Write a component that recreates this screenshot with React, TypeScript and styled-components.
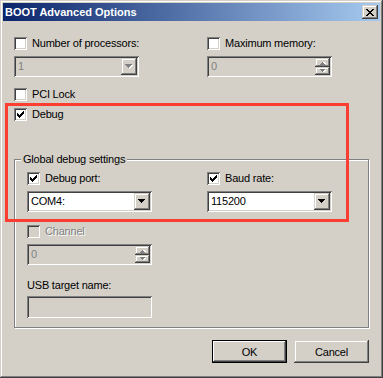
import * as React from 'react'
import styled, { createGlobalStyle, css } from 'styled-components'

const GlobalStyle = createGlobalStyle`
  html, body {
    margin: 0;
    padding: 0;
    background: #d4d0c8;
  }
  body {
    font-family: 'Liberation Sans', Arial, sans-serif;
    font-size: 11px;
    color: #000;
  }
`

const raised = css`
  box-shadow: inset -1px -1px #404040, inset 1px 1px #d4d0c8, inset -2px -2px #808080, inset 2px 2px #fff;
`

const sunken = css`
  box-shadow: inset 1px 1px #808080, inset -1px -1px #fff, inset 2px 2px #404040, inset -2px -2px #d4d0c8;
`

const Frame = styled.div`
  position: relative;
  width: 383px;
  height: 378px;
  box-sizing: border-box;
  padding: 3px;
  background: #d4d0c8;
  ${raised};
  display: flex;
  flex-direction: column;
`

const TitleBar = styled.div`
  height: 18px;
  flex: none;
  display: flex;
  align-items: center;
  justify-content: space-between;
  padding: 0 2px;
  background: linear-gradient(to right, #0a246a, #a6caf0);
  color: #fff;
  font-weight: bold;
  font-size: 11px;
`

const CloseButton = styled.div`
  width: 16px;
  height: 14px;
  box-sizing: border-box;
  background: #d4d0c8;
  ${raised};
  display: grid;
  place-items: center;
`

const Body = styled.div`
  flex: 1;
  display: flex;
  flex-direction: column;
  padding: 16px 11px 0 11px;
  letter-spacing: -0.2px;
`

const Columns = styled.div<{ $first: number }>`
  display: grid;
  grid-template-columns: ${p => p.$first}px 1fr;
`

const Field = styled.div`
  display: flex;
  flex-direction: column;
  gap: 6px;
`

const CheckRow = styled.label<{ $gap?: number; $disabled?: boolean }>`
  display: flex;
  align-items: center;
  gap: 5px;
  height: 13px;
  line-height: 13px;
  margin-top: ${p => p.$gap ?? 0}px;
  color: ${p => (p.$disabled ? '#808080' : '#000')};
  text-shadow: ${p => (p.$disabled ? '1px 1px #fff' : 'none')};
`

const Box = styled.span<{ $disabled?: boolean }>`
  width: 13px;
  height: 13px;
  flex: none;
  box-sizing: border-box;
  background: ${p => (p.$disabled ? '#d4d0c8' : '#fff')};
  ${sunken};
  display: grid;
  place-items: center;
`

const Sunken = styled.div<{ $disabled?: boolean; $h?: number }>`
  width: 125px;
  height: ${p => p.$h ?? 21}px;
  box-sizing: border-box;
  padding: 2px;
  background: ${p => (p.$disabled ? '#d4d0c8' : '#fff')};
  ${sunken};
  display: flex;
  color: ${p => (p.$disabled ? '#808080' : '#000')};
`

const Value = styled.span`
  flex: 1;
  padding-left: 2px;
  line-height: 17px;
`

const DropButton = styled.div`
  width: 16px;
  flex: none;
  background: #d4d0c8;
  ${raised};
  display: grid;
  place-items: center;
`

const SpinStack = styled.div`
  width: 15px;
  flex: none;
  display: flex;
  flex-direction: column;
`

const SpinButton = styled.div<{ $h: number }>`
  height: ${p => p.$h}px;
  background: #d4d0c8;
  ${raised};
  display: grid;
  place-items: center;
`

const Group = styled.div`
  width: 355px;
  height: 169px;
  box-sizing: border-box;
  margin-top: 38px;
  padding: 0 12px;
  border: 1px solid #808080;
  box-shadow: inset 1px 1px #fff, 1px 1px #fff;
  display: flex;
  flex-direction: column;
`

const Legend = styled.span`
  align-self: flex-start;
  margin: -7px 0 0 -6px;
  padding: 0 2px;
  line-height: 13px;
  background: #d4d0c8;
`

const Label = styled.div<{ $gap: number }>`
  margin-top: ${p => p.$gap}px;
  line-height: 13px;
`

const ButtonRow = styled.div`
  display: flex;
  justify-content: flex-end;
  gap: 7px;
  margin-top: 12px;
`

const Button = styled.div<{ $default?: boolean }>`
  width: 75px;
  height: 23px;
  box-sizing: border-box;
  display: grid;
  place-items: center;
  background: #d4d0c8;
  ${p =>
    p.$default
      ? css`box-shadow: inset 0 0 0 1px #000, inset -2px -2px #404040, inset 2px 2px #fff, inset -3px -3px #808080;`
      : raised};
`

const Highlight = styled.div`
  position: absolute;
  left: 5px;
  top: 103px;
  width: 344px;
  height: 119px;
  box-sizing: border-box;
  border: 3px solid #fc3d32;
  pointer-events: none;
`

const Check = () => (
  <svg width="7" height="7" viewBox="0 0 7 7" shapeRendering="crispEdges">
    <path d="M0 2h1v3H0zM1 3h1v3H1zM2 4h1v3H2zM3 3h1v3H3zM4 2h1v3H4zM5 1h1v3H5zM6 0h1v3H6z" fill="#000" />
  </svg>
)

const Arrow = ({ disabled }: { disabled?: boolean }) => (
  <svg width="8" height="5" viewBox="0 0 8 5" shapeRendering="crispEdges">
    {disabled && <path d="M1 1h7v1H1zM2 2h5v1H2zM3 3h3v1H3zM4 4h1v1H4z" fill="#fff" />}
    <path d="M0 0h7v1H0zM1 1h5v1H1zM2 2h3v1H2zM3 3h1v1H3z" fill={disabled ? '#808080' : '#000'} />
  </svg>
)

const SpinArrow = ({ up }: { up?: boolean }) => (
  <svg width="6" height="4" viewBox="0 0 6 4" shapeRendering="crispEdges">
    <g transform={up ? 'translate(0 4) scale(1 -1)' : undefined}>
      <path d="M1 1h5v1H1zM2 2h3v1H2z" fill="#fff" />
      <path d="M0 0h5v1H0zM1 1h3v1H1zM2 2h1v1H2z" fill="#808080" />
    </g>
  </svg>
)

const CloseX = () => (
  <svg width="8" height="7" viewBox="0 0 8 7" shapeRendering="crispEdges">
    <path
      d="M0 0h2v1H0zM6 0h2v1H6zM1 1h2v1H1zM5 1h2v1H5zM2 2h4v1H2zM3 3h2v1H3zM2 4h4v1H2zM1 5h2v1H1zM5 5h2v1H5zM0 6h2v1H0zM6 6h2v1H6z"
      fill="#000"
    />
  </svg>
)

const CheckItem = ({ label, checked, disabled, gap }: { label: string; checked?: boolean; disabled?: boolean; gap?: number }) => (
  <CheckRow $gap={gap} $disabled={disabled}>
    <Box $disabled={disabled}>{checked && <Check />}</Box>
    {label}
  </CheckRow>
)

const ComboBox = ({ value, disabled }: { value: string; disabled?: boolean }) => (
  <Sunken $disabled={disabled}>
    <Value>{value}</Value>
    <DropButton>
      <Arrow disabled={disabled} />
    </DropButton>
  </Sunken>
)

const SpinBox = ({ value }: { value: string }) => (
  <Sunken $disabled>
    <Value>{value}</Value>
    <SpinStack>
      <SpinButton $h={9}>
        <SpinArrow up />
      </SpinButton>
      <SpinButton $h={8}>
        <SpinArrow />
      </SpinButton>
    </SpinStack>
  </Sunken>
)

export default function App() {
  return (
    <>
      <GlobalStyle />
      <Frame>
        <TitleBar>
          <span>BOOT Advanced Options</span>
          <CloseButton>
            <CloseX />
          </CloseButton>
        </TitleBar>
        <Body>
          <Columns $first={193}>
            <Field>
              <CheckItem label="Number of processors:" />
              <ComboBox value="1" disabled />
            </Field>
            <Field>
              <CheckItem label="Maximum memory:" />
              <SpinBox value="0" />
            </Field>
          </Columns>
          <CheckItem label="PCI Lock" gap={11} />
          <CheckItem label="Debug" checked gap={7} />

          <Group>
            <Legend>Global debug settings</Legend>
            <Columns $first={180} style={{ marginTop: 6 }}>
              <Field>
                <CheckItem label="Debug port:" checked />
                <ComboBox value="COM4:" />
              </Field>
              <Field>
                <CheckItem label="Baud rate:" checked />
                <ComboBox value="115200" />
              </Field>
            </Columns>
            <Field style={{ marginTop: 13 }}>
              <CheckItem label="Channel" disabled />
              <SpinBox value="0" />
            </Field>
            <Label $gap={14}>USB target name:</Label>
            <Sunken $disabled $h={22} style={{ marginTop: 4 }} />
          </Group>

          <ButtonRow>
            <Button $default>OK</Button>
            <Button>Cancel</Button>
          </ButtonRow>
        </Body>
        <Highlight />
      </Frame>
    </>
  )
}
